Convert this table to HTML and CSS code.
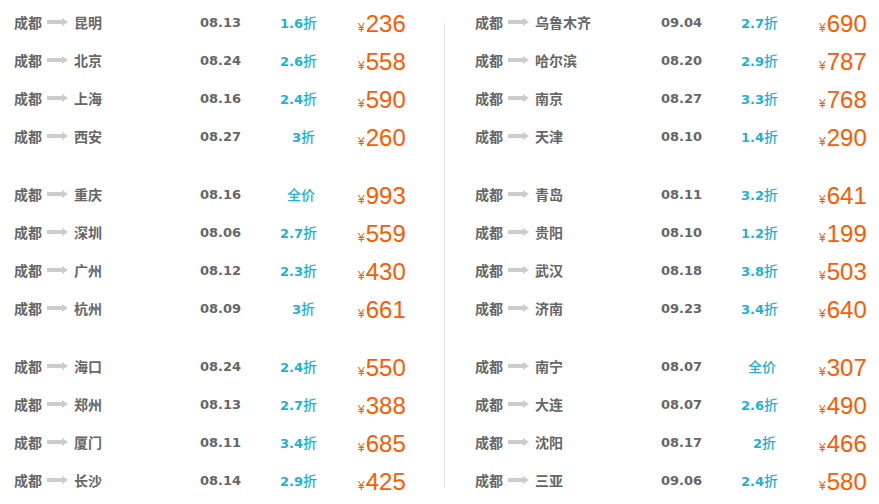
FILE: index.html
```html
<!DOCTYPE html>
<html lang="zh-CN">
<head>
<meta charset="utf-8">
<link rel="stylesheet" href="styles.css">
</head>
<body>
<div class="board">
  <div class="col col-left">
    <div class="group">
      <div class="row"><span class="route"><b>成都</b><i class="arrow"></i><b>昆明</b></span><span class="date">08.13</span><span class="disc">1.6<em>折</em></span><span class="price"><small>¥</small>236</span></div>
      <div class="row"><span class="route"><b>成都</b><i class="arrow"></i><b>北京</b></span><span class="date">08.24</span><span class="disc">2.6<em>折</em></span><span class="price"><small>¥</small>558</span></div>
      <div class="row"><span class="route"><b>成都</b><i class="arrow"></i><b>上海</b></span><span class="date">08.16</span><span class="disc">2.4<em>折</em></span><span class="price"><small>¥</small>590</span></div>
      <div class="row"><span class="route"><b>成都</b><i class="arrow"></i><b>西安</b></span><span class="date">08.27</span><span class="disc">3<em>折</em></span><span class="price"><small>¥</small>260</span></div>
    </div>
    <div class="group">
      <div class="row"><span class="route"><b>成都</b><i class="arrow"></i><b>重庆</b></span><span class="date">08.16</span><span class="disc"><em>全价</em></span><span class="price"><small>¥</small>993</span></div>
      <div class="row"><span class="route"><b>成都</b><i class="arrow"></i><b>深圳</b></span><span class="date">08.06</span><span class="disc">2.7<em>折</em></span><span class="price"><small>¥</small>559</span></div>
      <div class="row"><span class="route"><b>成都</b><i class="arrow"></i><b>广州</b></span><span class="date">08.12</span><span class="disc">2.3<em>折</em></span><span class="price"><small>¥</small>430</span></div>
      <div class="row"><span class="route"><b>成都</b><i class="arrow"></i><b>杭州</b></span><span class="date">08.09</span><span class="disc">3<em>折</em></span><span class="price"><small>¥</small>661</span></div>
    </div>
    <div class="group">
      <div class="row"><span class="route"><b>成都</b><i class="arrow"></i><b>海口</b></span><span class="date">08.24</span><span class="disc">2.4<em>折</em></span><span class="price"><small>¥</small>550</span></div>
      <div class="row"><span class="route"><b>成都</b><i class="arrow"></i><b>郑州</b></span><span class="date">08.13</span><span class="disc">2.7<em>折</em></span><span class="price"><small>¥</small>388</span></div>
      <div class="row"><span class="route"><b>成都</b><i class="arrow"></i><b>厦门</b></span><span class="date">08.11</span><span class="disc">3.4<em>折</em></span><span class="price"><small>¥</small>685</span></div>
      <div class="row"><span class="route"><b>成都</b><i class="arrow"></i><b>长沙</b></span><span class="date">08.14</span><span class="disc">2.9<em>折</em></span><span class="price"><small>¥</small>425</span></div>
    </div>
  </div>
  <div class="divider"></div>
  <div class="col col-right">
    <div class="group">
      <div class="row"><span class="route"><b>成都</b><i class="arrow"></i><b>乌鲁木齐</b></span><span class="date">09.04</span><span class="disc">2.7<em>折</em></span><span class="price"><small>¥</small>690</span></div>
      <div class="row"><span class="route"><b>成都</b><i class="arrow"></i><b>哈尔滨</b></span><span class="date">08.20</span><span class="disc">2.9<em>折</em></span><span class="price"><small>¥</small>787</span></div>
      <div class="row"><span class="route"><b>成都</b><i class="arrow"></i><b>南京</b></span><span class="date">08.27</span><span class="disc">3.3<em>折</em></span><span class="price"><small>¥</small>768</span></div>
      <div class="row"><span class="route"><b>成都</b><i class="arrow"></i><b>天津</b></span><span class="date">08.10</span><span class="disc">1.4<em>折</em></span><span class="price"><small>¥</small>290</span></div>
    </div>
    <div class="group">
      <div class="row"><span class="route"><b>成都</b><i class="arrow"></i><b>青岛</b></span><span class="date">08.11</span><span class="disc">3.2<em>折</em></span><span class="price"><small>¥</small>641</span></div>
      <div class="row"><span class="route"><b>成都</b><i class="arrow"></i><b>贵阳</b></span><span class="date">08.10</span><span class="disc">1.2<em>折</em></span><span class="price"><small>¥</small>199</span></div>
      <div class="row"><span class="route"><b>成都</b><i class="arrow"></i><b>武汉</b></span><span class="date">08.18</span><span class="disc">3.8<em>折</em></span><span class="price"><small>¥</small>503</span></div>
      <div class="row"><span class="route"><b>成都</b><i class="arrow"></i><b>济南</b></span><span class="date">09.23</span><span class="disc">3.4<em>折</em></span><span class="price"><small>¥</small>640</span></div>
    </div>
    <div class="group">
      <div class="row"><span class="route"><b>成都</b><i class="arrow"></i><b>南宁</b></span><span class="date">08.07</span><span class="disc"><em>全价</em></span><span class="price"><small>¥</small>307</span></div>
      <div class="row"><span class="route"><b>成都</b><i class="arrow"></i><b>大连</b></span><span class="date">08.07</span><span class="disc">2.6<em>折</em></span><span class="price"><small>¥</small>490</span></div>
      <div class="row"><span class="route"><b>成都</b><i class="arrow"></i><b>沈阳</b></span><span class="date">08.17</span><span class="disc">2<em>折</em></span><span class="price"><small>¥</small>466</span></div>
      <div class="row"><span class="route"><b>成都</b><i class="arrow"></i><b>三亚</b></span><span class="date">09.06</span><span class="disc">2.4<em>折</em></span><span class="price"><small>¥</small>580</span></div>
    </div>
  </div>
</div>
</body>
</html>
```
FILE: styles.css
```css
* { box-sizing: border-box; }
html, body { margin: 0; padding: 0; background: #fff; }
body {
  font-family: "Noto Sans CJK SC", "DejaVu Sans", sans-serif;
  color: #666;
  overflow: hidden;
}
.board {
  display: flex;
  align-items: flex-start;
  padding-top: 3px;
  padding-left: 14px;
}
.col { width: 430px; flex: none; }
.col-left { width: 430px; }
.col-right { padding-left: 30px; width: 435px; }
.divider {
  flex: none;
  width: 1px;
  height: 465px;
  margin-top: 20px;
  background: #e6e6e6;
}
.group + .group { margin-top: 20px; }
.row {
  display: flex;
  align-items: center;
  height: 38px;
}
.route {
  width: 186px;
  display: flex;
  align-items: center;
  font-size: 14px;
  font-weight: bold;
  color: #666;
}
.route b { font-weight: bold; }
.arrow {
  display: block;
  width: 21px;
  height: 8px;
  margin: 0 6px 0 5px;
  position: relative;
}
.arrow::before {
  content: "";
  position: absolute;
  left: 0;
  top: 2px;
  width: 15px;
  height: 4px;
  background: #cccccc;
}
.arrow::after {
  content: "";
  position: absolute;
  right: 0;
  top: 0;
  border-left: 6px solid #cccccc;
  border-top: 4px solid transparent;
  border-bottom: 4px solid transparent;
}
.date {
  width: 80px;
  font-family: "DejaVu Sans", sans-serif;
  font-weight: bold;
  font-size: 13px;
  color: #666;
}
.disc {
  width: 35px;
  text-align: right;
  font-family: "DejaVu Sans", "Noto Sans CJK SC", sans-serif;
  font-weight: bold;
  font-size: 13px;
  color: #1ab2d6;
  white-space: nowrap;
}
.disc em {
  font-style: normal;
  font-family: "Noto Sans CJK SC", sans-serif;
  font-size: 14px;
  font-weight: 500;
}
.price {
  margin-left: 43px;
  font-family: "Liberation Sans", Arial, sans-serif;
  font-size: 24px;
  color: #ff5a00;
  line-height: 1;
  padding-top: 3px;
}
.price small {
  font-size: 12px;
  margin-right: 1px;
}
```
